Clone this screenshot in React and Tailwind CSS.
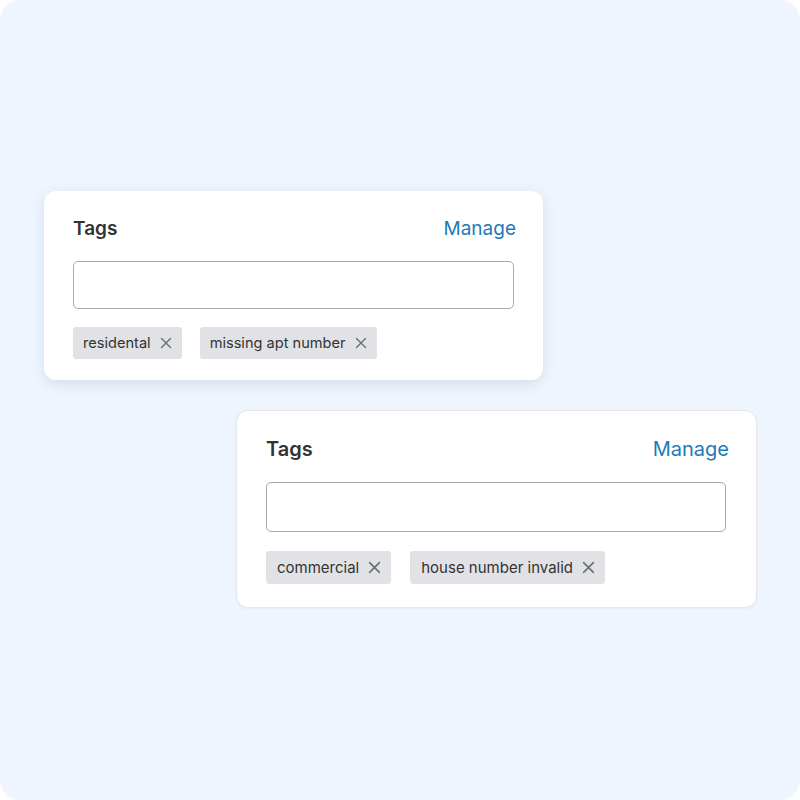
import React from 'react'

const font = { fontFamily: 'Inter, "Noto Sans", sans-serif' }

function XIcon({ size = 12 }) {
  return (
    <svg width={size} height={size} viewBox="0 0 12 12" fill="none" stroke="#6b6d72" strokeWidth="1.4" strokeLinecap="round">
      <path d="M1.5 1.5l9 9M10.5 1.5l-9 9" />
    </svg>
  )
}

function Chip({ label, big }) {
  return (
    <span
      className={
        big
          ? 'inline-flex items-center gap-[9px] h-[33px] pl-[11px] pr-[10px] rounded-[3px] bg-[#e1e2e6] text-[15px] text-[#333]'
          : 'inline-flex items-center gap-[9px] h-[32px] pl-[10px] pr-[10px] rounded-[3px] bg-[#e1e2e6] text-[14.6px] text-[#333]'
      }
    >
      <span className="pt-[2px]">{label}</span>
      <XIcon size={big ? 13 : 12} />
    </span>
  )
}

function TagCard({ tags, big, className }) {
  return (
    <div className={className}>
      <div className="flex items-center justify-between">
        <span className={big ? 'text-[20px] leading-[26px] font-semibold text-[#333]' : 'text-[19px] leading-[24px] font-semibold text-[#333]'}>
          Tags
        </span>
        <span className={big ? 'mr-[-3px] text-[20px] leading-[26px] text-[#1f7ab8]' : 'mr-[-2px] text-[19px] leading-[24px] text-[#1f7ab8]'}>
          Manage
        </span>
      </div>
      <div
        className={
          big
            ? 'mt-[20px] h-[50px] rounded-[5px] border border-[#a9a9ab] bg-white'
            : 'mt-[20px] h-[48px] rounded-[5px] border border-[#a9a9ab] bg-white'
        }
      />
      <div className={big ? 'mt-[19px] flex gap-[19px]' : 'mt-[18px] flex gap-[18px]'}>
        {tags.map((t) => (
          <Chip key={t} label={t} big={big} />
        ))}
      </div>
    </div>
  )
}

export default function App() {
  return (
    <div className="w-[800px] h-[800px] bg-white" style={font}>
      <div className="w-full h-full rounded-[20px] bg-[#eef5fe] flex flex-col">
        <TagCard
          tags={['residental', 'missing apt number']}
          className="ml-[44px] mt-[191px] w-[499px] rounded-[12px] bg-white pt-[26px] pb-[21px] px-[29px] shadow-[0_4px_14px_rgba(30,60,110,0.12)]"
        />
        <TagCard
          big
          tags={['commercial', 'house number invalid']}
          className="ml-[236px] mt-[30px] w-[521px] rounded-[12px] bg-white border border-[#e3e6ea] pt-[25px] pb-[23px] pl-[29px] pr-[30px] shadow-[0_1px_3px_rgba(30,60,110,0.05)]"
        />
      </div>
    </div>
  )
}
